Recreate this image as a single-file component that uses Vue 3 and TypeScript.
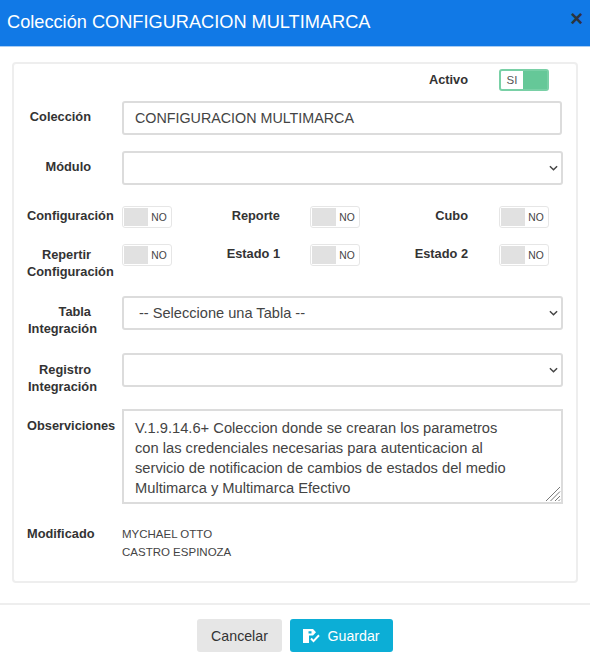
<script setup lang="ts">
interface Sw { label: string; cls: string }
const row1: Sw[] = [
  { label: 'Reporte', cls: 'mid' },
  { label: 'Cubo', cls: 'end' },
]
const row2: Sw[] = [
  { label: 'Estado 1', cls: 'mid' },
  { label: 'Estado 2', cls: 'end' },
]
const obs =
  'V.1.9.14.6+ Coleccion donde se crearan los parametros con las credenciales necesarias para autenticacion al servicio de notificacion de cambios de estados del medio Multimarca y Multimarca Efectivo'
</script>

<template>
  <div class="modal">
    <header class="head">
      <h1>Colección CONFIGURACION MULTIMARCA</h1>
      <span class="close">×</span>
    </header>
    <main class="body">
      <section class="card">
        <div class="activo">
          <span class="lab">Activo</span>
          <span class="tg on"><em>SI</em><i></i></span>
        </div>
        <div class="row r-col">
          <label class="lab p31">Colección</label>
          <input class="ctl" value="CONFIGURACION MULTIMARCA" />
        </div>
        <div class="row r-mod">
          <label class="lab p31">Módulo</label>
          <div class="sel"><select class="ctl"><option></option></select><svg viewBox="0 0 10 6"><path d="M1 1l4 4 4-4" /></svg></div>
        </div>
        <div class="sw r-s1">
          <span class="lab first">Configuración</span>
          <span class="tg"><i></i><em>NO</em></span>
          <template v-for="s in row1" :key="s.label">
            <span class="lab" :class="s.cls">{{ s.label }}</span>
            <span class="tg"><i></i><em>NO</em></span>
          </template>
        </div>
        <div class="sw r-s2">
          <span class="lab first"><b class="p31">Repertir</b><b class="p9">Configuración</b></span>
          <span class="tg"><i></i><em>NO</em></span>
          <template v-for="s in row2" :key="s.label">
            <span class="lab" :class="s.cls">{{ s.label }}</span>
            <span class="tg"><i></i><em>NO</em></span>
          </template>
        </div>
        <div class="row r-tab">
          <label class="lab"><b class="p31">Tabla</b><b class="p25">Integración</b></label>
          <div class="sel"><select class="ctl t"><option>-- Seleccione una Tabla --</option></select><svg viewBox="0 0 10 6"><path d="M1 1l4 4 4-4" /></svg></div>
        </div>
        <div class="row r-reg">
          <label class="lab"><b class="p31">Registro</b><b class="p25">Integración</b></label>
          <div class="sel"><select class="ctl t"><option></option></select><svg viewBox="0 0 10 6"><path d="M1 1l4 4 4-4" /></svg></div>
        </div>
        <div class="row r-obs">
          <label class="lab left">Observiciones</label>
          <div class="areawrap">
            <textarea class="area" :value="obs"></textarea>
            <svg class="grip" viewBox="0 0 16 16"><path d="M1 15L15 1M5.500 15L15 5.500M10 15l5-5M13.500 15l1.500-1.500" /></svg>
          </div>
        </div>
        <div class="row r-by">
          <span class="lab left">Modificado</span>
          <p class="by">MYCHAEL OTTO<br />CASTRO ESPINOZA</p>
        </div>
      </section>
    </main>
    <footer class="foot">
      <button class="btn cancel">Cancelar</button>
      <button class="btn save">
        <svg viewBox="0 0 17 14"><path d="M0 0h10l3 3.300-3 3.300H6V14H0zM5.500 2.200v2.200h3V2.200z" fill-rule="evenodd" /><path d="M8 9.500l2.500 2.600 5.500-5.800" class="chk" /></svg>
        Guardar
      </button>
    </footer>
  </div>
</template>

<style>
html, body { margin: 0; background: #fff; }
</style>

<style scoped>
.modal { width: 590px; height: 653px; display: flex; flex-direction: column; font-family: "Liberation Sans", Arial, sans-serif; color: #333; overflow: hidden; }
.head { height: 47px; flex: none; box-sizing: border-box; background: #1179e6; border-bottom: 1px solid #a9cdf3; display: flex; align-items: center; justify-content: space-between; padding: 0 7px; }
.head h1 { margin: -1px 0 0; font-size: 18.2px; font-weight: 400; color: #fff; }
.close { font-size: 22px; font-weight: 700; color: #2b3440; line-height: 1; margin-top: -9px; }
.body { padding: 15px 12px 0; height: 558px; flex: none; box-sizing: border-box; border-bottom: 2px solid #eee; }
.card { box-sizing: border-box; height: 521px; border: 2px solid #eee; border-radius: 4px; padding: 5px 14px 0 13px; }
.lab { font-family: "Liberation Sans", sans-serif; font-size: 12.8px; font-weight: 700; color: #333; line-height: 17px; }
.lab b { display: block; font-weight: 700; text-align: right; white-space: nowrap; }
.p31 { padding-right: 31px; }
.p25 { padding-right: 25px; }
.p9 { padding-right: 9px; }
.row { display: flex; align-items: flex-start; }
.row > .lab { width: 95px; flex: none; text-align: right; box-sizing: border-box; }
.row > .lab.left { text-align: left; white-space: nowrap; }
.activo { display: flex; align-items: center; justify-content: flex-end; gap: 31px; height: 22px; padding-right: 13px; }
.activo .lab { margin-top: -2px; }
.tg { box-sizing: border-box; width: 50px; height: 22px; border: 1px solid #e6e6e6; border-radius: 3px; background: #fff; display: flex; align-items: center; padding: 1px; flex: none; }
.tg i { display: block; width: 24px; height: 18px; background: #e1e1e1; }
.tg em { flex: 1; text-align: center; font-style: normal; font-size: 10.3px; color: #444; font-family: "Liberation Sans", sans-serif; }
.tg.on { border: 2px solid #79d0a6; padding: 0; }
.tg.on em { color: #555; font-size: 11.5px; }
.tg.on i { background: #65c898; }
.ctl { box-sizing: border-box; width: 441px; height: 34px; border: 2px solid #dcdcdc; border-radius: 3px; background: #fff; font-family: "Liberation Sans", sans-serif; font-size: 14.3px; color: #444; padding: 0 11px; outline: none; display: block; }
select.ctl { appearance: none; font-size: 14.6px; }
select.ctl.t { padding-left: 15px; }
.sel { position: relative; }
.sel svg { position: absolute; right: 5px; top: 14px; width: 9px; height: 6px; fill: none; stroke: #444; stroke-width: 1.6; }
.r-col { margin-top: 10px; }
.r-col .lab, .r-mod .lab { padding-top: 7px; }
.r-mod { margin-top: 16px; }
.r-s1 { margin-top: 21px; }
.r-s2 { margin-top: 16px; }
.sw { display: flex; align-items: flex-start; }
.sw .first { width: 95px; flex: none; white-space: nowrap; }
.r-s2 .first { padding-top: 2px; }
.r-s2 .mid, .r-s2 .end { padding-top: 1px; }
.sw .mid { width: 138px; text-align: right; padding-right: 30px; box-sizing: border-box; }
.sw .end { width: 139px; text-align: right; padding-right: 31px; box-sizing: border-box; }
.r-s1 .lab { padding-top: 1px; }
.r-tab { margin-top: 16px; }
.r-tab .lab { padding-top: 7px; }
.r-reg .lab { padding-top: 8px; }
.r-reg { margin-top: 16px; }
.r-obs { margin-top: 14px; }
.r-obs .lab { padding-top: 8px; }
.areawrap { position: relative; height: 95px; }
.area { box-sizing: border-box; display: block; width: 441px; height: 95px; border: 2px solid #dcdcdc; font-family: "Liberation Sans", sans-serif; font-size: 14.7px; line-height: 20px; color: #444; padding: 7px 49px 0 11px; outline: none; border-radius: 0; margin: 0; overflow: hidden; resize: none; }
.grip { position: absolute; right: 2px; bottom: 2px; width: 16px; height: 16px; fill: none; stroke: #777; stroke-width: 1; }
.r-by { margin-top: 20px; }
.r-by .lab { padding-top: 1px; }
.by { margin: 0; font-size: 11.5px; line-height: 18px; color: #444; padding-top: 1px; }
.foot { flex: 1; display: flex; justify-content: center; align-items: flex-start; gap: 8px; padding-top: 14px; }
.btn { height: 33px; border: 0; border-radius: 3px; font-family: "Liberation Sans", sans-serif; font-size: 14.2px; padding: 0; display: flex; align-items: center; justify-content: center; }
.cancel { width: 85px; background: #e6e6e6; color: #333; }
.save { width: 103px; background: #0caed6; color: #fff; gap: 7px; }
.save svg { width: 17px; height: 14px; fill: #fff; }
.save .chk { fill: none; stroke: #fff; stroke-width: 2; }
</style>
